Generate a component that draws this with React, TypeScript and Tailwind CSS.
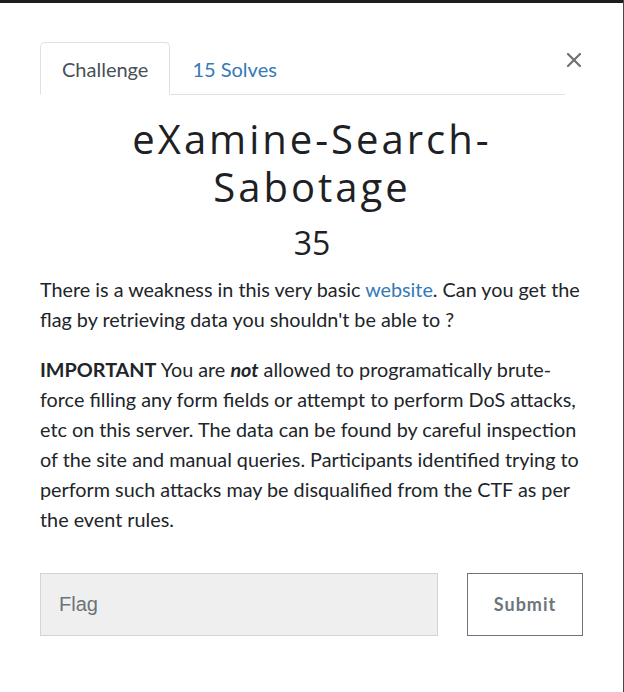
import { X } from 'lucide-react';

export default function App() {
  return (
    <div className="relative w-[624px] h-[692px] bg-white overflow-hidden" style={{ fontFamily: 'Lato, "Liberation Sans", sans-serif' }}>
      {/* strip of the page behind the modal */}
      <div className="h-[3px] bg-[#1b1d1f]" />
      <div className="absolute right-0 top-0 w-[1px] h-full bg-[#3d4a47]" />

      <div className="px-10 pt-[39px]">
        {/* Tabs */}
        <div className="flex items-start">
          <div className="flex shrink-0 w-[525px] border-b border-[#dee2e6]">
            <div className="-mb-px h-[53px] px-[21px] pt-[1px] flex items-center border border-[#dee2e6] border-b-white rounded-t-[5px] bg-white text-[20px] text-[#495057]">
              Challenge
            </div>
            <div className="h-[52px] px-[22px] pt-[1px] flex items-center text-[20px] text-[#337ab7]">
              15 Solves
            </div>
          </div>
          <button className="shrink-0 -ml-[3px] mt-[6px] text-[#707070]">
            <X className="w-6 h-6" strokeWidth={2.2} />
          </button>
        </div>

        {/* Title */}
        <h1
          className="mt-[20px] text-center text-[40px] leading-[48px] tracking-[3px] text-[#1e2124] font-normal"
          style={{ fontFamily: '"Open Sans", Lato, sans-serif' }}
        >
          eXamine-Search-
          <br />
          Sabotage
        </h1>
        <div className="mt-[10px] text-center text-[32px] leading-[44px] text-[#1e2124]" style={{ fontFamily: '"Open Sans", Lato, sans-serif' }}>
          35
        </div>

        {/* Description */}
        <div className="mt-[9px] text-[19.8px] leading-[30px] text-[#212529]">
          <p>
            There is a weakness in this very basic <span className="text-[#337ab7]">website</span>. Can you get the flag by retrieving data you shouldn't be able to ?
          </p>
          <p className="mt-[20px]">
            <strong className="font-bold">IMPORTANT</strong> You are <strong className="font-bold italic">not</strong> allowed to programatically brute-force filling any form fields or attempt to perform DoS attacks, etc on this server. The data can be found by careful inspection of the site and manual queries. Participants identified trying to perform such attacks may be disqualified from the CTF as per the event rules.
          </p>
        </div>

        {/* Flag form */}
        <div className="mt-[39px] flex items-center">
          <input
            placeholder="Flag"
            className="w-[398px] h-[63px] bg-[#efefef] border border-[#cdd4da] px-[18px] text-[20px] text-[#495057] placeholder:text-[#6b737a] outline-none"
            style={{ fontFamily: '"Liberation Sans", Arial, sans-serif' }}
          />
          <button className="ml-[29px] w-[116px] h-[63px] border border-[#6c757d] bg-white text-[18px] font-bold tracking-[1px] text-[#6c757d]">
            Submit
          </button>
        </div>
      </div>
    </div>
  );
}
